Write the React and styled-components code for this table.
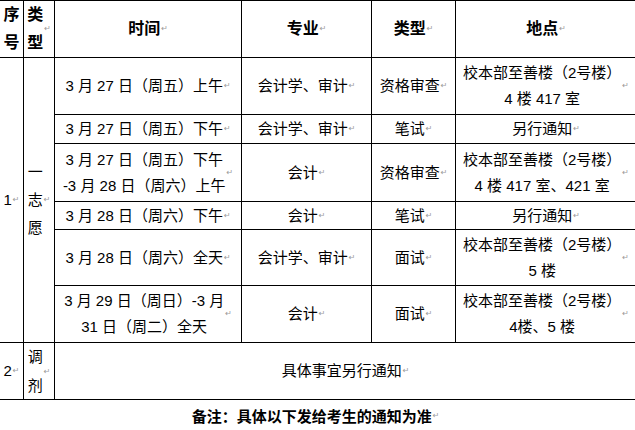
import React from "react";
import styled, { createGlobalStyle } from "styled-components";

const Global = createGlobalStyle`
  html, body { margin: 0; padding: 0; background: #fff; overflow: hidden; }
  body { font-family: "Liberation Sans", "Noto Sans CJK SC", sans-serif; color: #000; }
`;

const Page = styled.div`
  width: 635px;
  height: 430px;
  overflow: hidden;
  display: flex;
  flex-direction: column;
`;

const Table = styled.div`
  display: grid;
  grid-template-columns: 23px 30px 186px 129px 83px 180px;
  grid-template-rows: 56px 56px 28px 57px 27px 55px 56px 56px;
  gap: 1px;
  padding: 1px 0;
  background: #000;
  width: 636px;
`;

const Cell = styled.div`
  grid-row: ${(p) => p.$row};
  grid-column: ${(p) => p.$col};
  background: #fff;
  display: flex;
  align-items: center;
  justify-content: center;
  text-align: center;
  font-size: 15px;
  line-height: ${(p) => p.$lh || 26}px;
  white-space: nowrap;
`;

const HeadCell = styled(Cell)`
  font-size: 16px;
  font-weight: 700;
  line-height: 28px;
`;

const Mark = styled.span`
  font-family: "DejaVu Sans", sans-serif;
  font-size: 8px;
  font-weight: 400;
  color: #9a9a9a;
  margin-left: 1px;
`;

const Note = styled.div`
  height: 30px;
  display: flex;
  align-items: center;
  justify-content: center;
  font-size: 15px;
  font-weight: 700;
  padding-right: 4px;
`;

const M = () => <Mark>↵</Mark>;

export default function App() {
  return (
    <Page>
      <Global />
      <Table>
        <HeadCell $row="1" $col="1">序<br />号</HeadCell>
        <HeadCell $row="1" $col="2">类<br />型<M /></HeadCell>
        <HeadCell $row="1" $col="3">时间<M /></HeadCell>
        <HeadCell $row="1" $col="4">专业<M /></HeadCell>
        <HeadCell $row="1" $col="5">类型<M /></HeadCell>
        <HeadCell $row="1" $col="6">地点<M /></HeadCell>

        <Cell $row="2 / 8" $col="1">1<M /></Cell>
        <Cell $row="2 / 8" $col="2" $lh={28}>一<br />志<br />愿<M /></Cell>

        <Cell $row="2" $col="3">3 月 27 日（周五）上午<M /></Cell>
        <Cell $row="2" $col="4">会计学、审计<M /></Cell>
        <Cell $row="2" $col="5">资格审查<M /></Cell>
        <Cell $row="2" $col="6">校本部至善楼（2号楼）<br />4 楼 417 室<M /></Cell>

        <Cell $row="3" $col="3">3 月 27 日（周五）下午<M /></Cell>
        <Cell $row="3" $col="4">会计学、审计<M /></Cell>
        <Cell $row="3" $col="5">笔试<M /></Cell>
        <Cell $row="3" $col="6">另行通知<M /></Cell>

        <Cell $row="4" $col="3">3 月 27 日（周五）下午<br />-3 月 28 日（周六）上午<M /></Cell>
        <Cell $row="4" $col="4">会计<M /></Cell>
        <Cell $row="4" $col="5">资格审查<M /></Cell>
        <Cell $row="4" $col="6">校本部至善楼（2号楼）<br />4 楼 417 室、421 室<M /></Cell>

        <Cell $row="5" $col="3">3 月 28 日（周六）下午<M /></Cell>
        <Cell $row="5" $col="4">会计<M /></Cell>
        <Cell $row="5" $col="5">笔试<M /></Cell>
        <Cell $row="5" $col="6">另行通知<M /></Cell>

        <Cell $row="6" $col="3">3 月 28 日（周六）全天<M /></Cell>
        <Cell $row="6" $col="4">会计学、审计<M /></Cell>
        <Cell $row="6" $col="5">面试<M /></Cell>
        <Cell $row="6" $col="6">校本部至善楼（2号楼）<br />5 楼<M /></Cell>

        <Cell $row="7" $col="3">3 月 29 日（周日）-3 月<br />31 日（周二）全天<M /></Cell>
        <Cell $row="7" $col="4">会计<M /></Cell>
        <Cell $row="7" $col="5">面试<M /></Cell>
        <Cell $row="7" $col="6">校本部至善楼（2号楼）<br />4楼、5 楼<M /></Cell>

        <Cell $row="8" $col="1">2<M /></Cell>
        <Cell $row="8" $col="2" $lh={29}>调<br />剂<M /></Cell>
        <Cell $row="8" $col="3 / 7">具体事宜另行通知<M /></Cell>
      </Table>
      <Note>备注：具体以下发给考生的通知为准<M /></Note>
    </Page>
  );
}
